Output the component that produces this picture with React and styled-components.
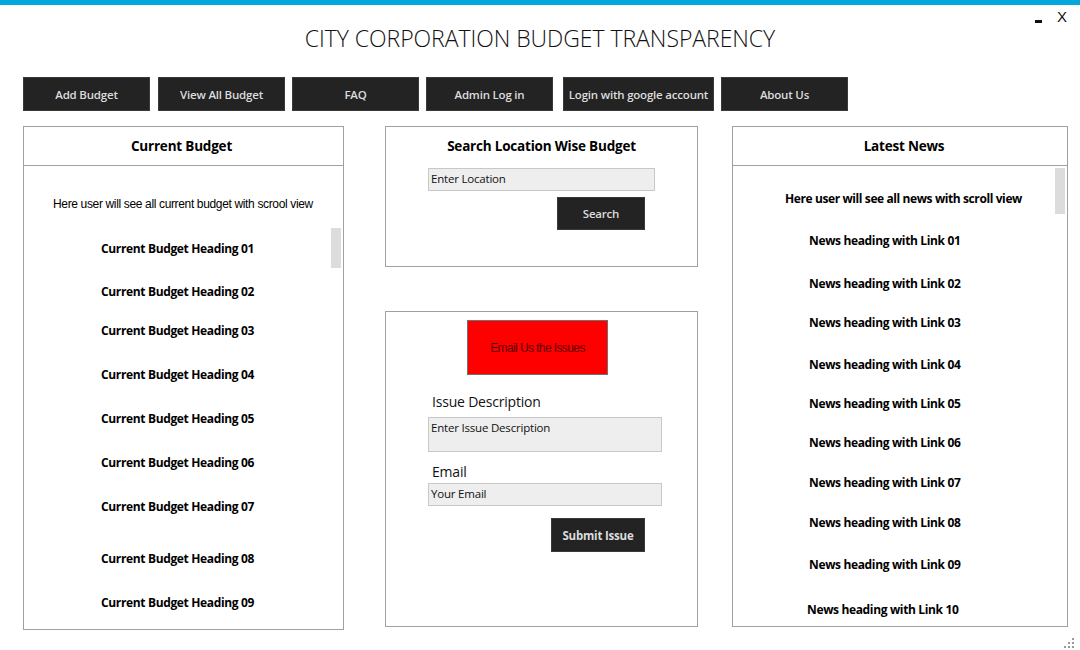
import React from 'react';
import styled, { createGlobalStyle } from 'styled-components';

// ------------------ DATA ------------------
const navItems = [
  { label: 'Add Budget', width: 127 },
  { label: 'View All Budget', width: 127 },
  { label: 'FAQ', width: 127 },
  { label: 'Admin Log in', width: 127 },
  { label: 'Login with google account', width: 151 },
  { label: 'About Us', width: 127 },
];

// gap above each heading, as in the form designer
const budgetItems = [
  { label: 'Current Budget Heading 01', gap: 0 },
  { label: 'Current Budget Heading 02', gap: 25 },
  { label: 'Current Budget Heading 03', gap: 21 },
  { label: 'Current Budget Heading 04', gap: 26 },
  { label: 'Current Budget Heading 05', gap: 26 },
  { label: 'Current Budget Heading 06', gap: 26 },
  { label: 'Current Budget Heading 07', gap: 26 },
  { label: 'Current Budget Heading 08', gap: 34 },
  { label: 'Current Budget Heading 09', gap: 26 },
];

const newsItems = [
  { label: 'News heading with Link 01', gap: 0 },
  { label: 'News heading with Link 02', gap: 25 },
  { label: 'News heading with Link 03', gap: 21 },
  { label: 'News heading with Link 04', gap: 24 },
  { label: 'News heading with Link 05', gap: 21 },
  { label: 'News heading with Link 06', gap: 21 },
  { label: 'News heading with Link 07', gap: 22 },
  { label: 'News heading with Link 08', gap: 22 },
  { label: 'News heading with Link 09', gap: 24 },
  { label: 'News heading with Link 10', gap: 27, shift: -2 },
];

// ------------------ COMPONENT ------------------
const App = () => {
  return (
    <>
      <GlobalStyle />
      <Window>
        <TopBar />
        <WindowControls>
          <Minimize />
          <CloseBtn>X</CloseBtn>
        </WindowControls>
        <Title>CITY CORPORATION BUDGET TRANSPARENCY</Title>

        {/* navigation */}
        <Nav>
          {navItems.map((item) => (
            <NavButton key={item.label} $width={item.width}>
              {item.label}
            </NavButton>
          ))}
        </Nav>

        <Columns>
          {/* current budget */}
          <Panel $height={504}>
            <PanelHeader $offset={-2}>Current Budget</PanelHeader>
            <ScrollBody>
              <Hint>Here user will see all current budget with scrool view</Hint>
              <ItemList $left={77} $top={28}>
                {budgetItems.map((item) => (
                  <Item key={item.label} $gap={item.gap}>
                    {item.label}
                  </Item>
                ))}
              </ItemList>
              <Thumb $top={62} $height={40} />
            </ScrollBody>
          </Panel>

          <MiddleColumn>
            {/* search */}
            <Box $height={141}>
              <BoxTitle>Search Location Wise Budget</BoxTitle>
              <Field $height={23}>Enter Location</Field>
              <ActionRow $gap={6}>
                <DarkButton $width={88} $height={33}>Search</DarkButton>
              </ActionRow>
            </Box>

            {/* issue form */}
            <Box $height={316}>
              <RedBanner>Email Us the Issues</RedBanner>
              <Label $gap={17} $below={5}>Issue Description</Label>
              <Field $height={35} $width={234}>Enter Issue Description</Field>
              <Label $gap={10} $below={1}>Email</Label>
              <Field $height={23} $width={234}>Your Email</Field>
              <ActionRow $gap={12} $right={52}>
                <DarkButton $width={94} $height={34} $bold>
                  Submit Issue
                </DarkButton>
              </ActionRow>
            </Box>
          </MiddleColumn>

          {/* news */}
          <Panel $height={501} $width={336}>
            <PanelHeader $offset={4}>Latest News</PanelHeader>
            <ScrollBody>
              <NewsHint>Here user will see all news with scroll view</NewsHint>
              <ItemList $left={76} $top={25}>
                {newsItems.map((item) => (
                  <Item key={item.label} $gap={item.gap} $shift={item.shift}>
                    {item.label}
                  </Item>
                ))}
              </ItemList>
              <Thumb $top={2} $height={46} $right={2} />
            </ScrollBody>
          </Panel>
        </Columns>

        <Grip>
          <svg width="14" height="14" viewBox="0 0 14 14">
            {[
              [10, 0],
              [10, 4],
              [6, 4],
              [10, 8],
              [6, 8],
              [2, 8],
            ].map(([x, y]) => (
              <rect key={`${x}-${y}`} x={x} y={y + 2} width="2" height="2" fill="#9a9a9a" />
            ))}
          </svg>
        </Grip>
      </Window>
    </>
  );
};

// ------------------ STYLE ------------------
const GlobalStyle = createGlobalStyle`
  html, body {
    margin: 0;
    padding: 0;
    background: #fff;
  }
  body {
    font-family: 'Open Sans', 'Noto Sans', sans-serif;
    color: #000;
  }
`;

const Window = styled.div`
  position: relative;
  width: 1080px;
  height: 650px;
  overflow: hidden;
  background: #fff;
`;

const TopBar = styled.div`
  height: 5px;
  background: #05a8dc;
`;

const WindowControls = styled.div`
  position: absolute;
  top: 8px;
  right: 13px;
  display: flex;
  align-items: center;
  gap: 15px;
`;

const Minimize = styled.span`
  display: block;
  width: 7px;
  height: 3px;
  margin-top: 10px;
  background: #111;
`;

const CloseBtn = styled.span`
  font-family: 'Liberation Sans', sans-serif;
  font-size: 15px;
  color: #111;
`;

const Title = styled.h1`
  margin: 19px 0 0;
  text-align: center;
  font-family: 'Open Sans', sans-serif;
  font-weight: 300;
  font-size: 23px;
  line-height: 28px;
  letter-spacing: -0.05px;
  color: #111;
`;

const Nav = styled.nav`
  display: flex;
  gap: 7px;
  margin: 25px 0 0 23px;
  & > :nth-child(2) {
    margin-left: 1px;
  }
  & > :nth-child(5) {
    margin-left: 3px;
  }
`;

const NavButton = styled.button`
  width: ${(p) => p.$width}px;
  height: 34px;
  padding: 0;
  border: 1px solid #3a3a3a;
  background: #232323;
  color: #dcdcdc;
  font-family: 'Open Sans', sans-serif;
  font-weight: 600;
  font-size: 11.5px;
  letter-spacing: -0.2px;
  cursor: pointer;
`;

const Columns = styled.div`
  display: flex;
  align-items: flex-start;
  margin: 15px 0 0 23px;
  & > :nth-child(2) {
    margin-left: 41px;
  }
  & > :nth-child(3) {
    margin-left: 34px;
  }
`;

const Panel = styled.section`
  width: ${(p) => p.$width || 321}px;
  height: ${(p) => p.$height}px;
  box-sizing: border-box;
  border: 1px solid #a0a0a0;
  display: flex;
  flex-direction: column;
`;

const PanelHeader = styled.h2`
  margin: 0;
  height: 39px;
  flex-shrink: 0;
  border-bottom: 1px solid #a0a0a0;
  display: flex;
  align-items: center;
  justify-content: center;
  padding-left: ${(p) => Math.max(p.$offset, 0) * 2}px;
  padding-right: ${(p) => Math.max(-p.$offset, 0) * 2}px;
  padding-bottom: 1px;
  box-sizing: border-box;
  font-size: 13.5px;
  font-weight: 700;
  letter-spacing: -0.2px;
`;

const ScrollBody = styled.div`
  position: relative;
  flex: 1;
  overflow: hidden;
`;

const Hint = styled.p`
  margin: 30px 0 0 29px;
  font-family: 'Liberation Sans', sans-serif;
  font-size: 12px;
  letter-spacing: -0.35px;
  line-height: 16px;
`;

const NewsHint = styled.p`
  margin: 25px 0 0 52px;
  font-size: 12px;
  font-weight: 700;
  letter-spacing: -0.4px;
  line-height: 16px;
`;

const ItemList = styled.ul`
  list-style: none;
  margin: ${(p) => p.$top}px 0 0 ${(p) => p.$left}px;
  padding: 0;
  display: flex;
  flex-direction: column;
`;

const Item = styled.li`
  margin-top: ${(p) => p.$gap}px;
  margin-left: ${(p) => p.$shift || 0}px;
  font-size: 12px;
  font-weight: 700;
  letter-spacing: -0.35px;
  line-height: 18px;
  white-space: nowrap;
`;

const Thumb = styled.div`
  position: absolute;
  top: ${(p) => p.$top}px;
  right: ${(p) => p.$right || 2}px;
  width: 10px;
  height: ${(p) => p.$height}px;
  background: #dcdcdc;
`;

const MiddleColumn = styled.div`
  display: flex;
  flex-direction: column;
  gap: 44px;
`;

const Box = styled.section`
  width: 313px;
  height: ${(p) => p.$height}px;
  box-sizing: border-box;
  border: 1px solid #a0a0a0;
  display: flex;
  flex-direction: column;
  padding: 0 0 0 42px;
`;

const BoxTitle = styled.h2`
  margin: 10px 0 13px -42px;
  text-align: center;
  font-size: 13.5px;
  font-weight: 700;
  letter-spacing: -0.2px;
  line-height: 18px;
`;

const Field = styled.div`
  width: ${(p) => p.$width || 227}px;
  height: ${(p) => p.$height}px;
  box-sizing: border-box;
  border: 1px solid #c8c8c8;
  background: #eeeeee;
  padding: 2px 0 0 2px;
  font-size: 11.5px;
  letter-spacing: -0.2px;
  line-height: 16px;
  color: #111;
`;

const ActionRow = styled.div`
  display: flex;
  justify-content: flex-end;
  margin-top: ${(p) => p.$gap || 6}px;
  margin-right: ${(p) => p.$right || 52}px;
`;

const DarkButton = styled.button`
  width: ${(p) => p.$width}px;
  height: ${(p) => p.$height}px;
  padding: 0;
  border: 1px solid #3a3a3a;
  background: #232323;
  color: #dcdcdc;
  font-family: 'Open Sans', sans-serif;
  font-weight: ${(p) => (p.$bold ? 700 : 600)};
  font-size: 11.5px;
  letter-spacing: -0.2px;
  cursor: pointer;
`;

const RedBanner = styled.div`
  align-self: flex-start;
  margin: 8px 0 0 39px;
  width: 141px;
  height: 55px;
  box-sizing: border-box;
  border: 1px solid #707070;
  background: #ff0000;
  color: #5a0000;
  display: flex;
  align-items: center;
  justify-content: center;
  font-family: 'Liberation Sans', sans-serif;
  font-size: 12px;
  letter-spacing: -0.6px;
`;

const Label = styled.div`
  margin: ${(p) => p.$gap}px 0 ${(p) => p.$below}px 4px;
  font-size: 14px;
  line-height: 20px;
  letter-spacing: -0.2px;
  color: #111;
`;

const Grip = styled.div`
  position: absolute;
  right: 4px;
  bottom: 3px;
  width: 14px;
  height: 14px;
`;

// ------------------ EXPORT ------------------
export default App;
